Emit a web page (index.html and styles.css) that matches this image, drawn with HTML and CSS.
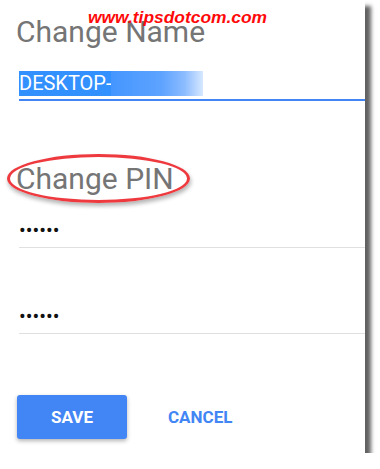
FILE: index.html
```html
<!DOCTYPE html>
<html lang="en">

<head>
    <meta charset="UTF-8">
    <meta name="viewport" content="width=device-width, initial-scale=1.0">
    <title>Change Name</title>
    <link rel="stylesheet" href="styles.css">
</head>

<body>
    <div class="panel">
        <div class="watermark">www.tipsdotcom.com</div>

        <h2 class="title">Change Name</h2>
        <div class="field active">
            <span class="selected">DESKTOP-</span><span class="blurred"></span>
        </div>

        <div class="title-wrap">
            <h2 class="title">Change PIN</h2>
            <div class="ellipse"></div>
        </div>
        <div class="field pin first">••••••</div>
        <div class="field pin second">••••••</div>

        <div class="actions">
            <button class="btn save">SAVE</button>
            <button class="btn cancel">CANCEL</button>
        </div>
    </div>
</body>

</html>
```

FILE: styles.css
```css
body {
    margin: 0;
    background-color: white;
    font-family: Roboto, "Noto Sans", sans-serif;
}

.panel {
    position: relative;
    width: 365px;
    height: 453px;
    box-sizing: border-box;
    padding: 14px 0 0 16px;
    background-color: white;
    box-shadow: 6px 6px 4px rgba(0, 0, 0, 0.62);
}

.watermark {
    position: absolute;
    top: 9px;
    left: 88px;
    font-family: "Liberation Sans", Arial, sans-serif;
    font-size: 17.4px;
    line-height: 17px;
    font-weight: bold;
    font-style: italic;
    color: #ff0a0a;
}

.title {
    margin: 0;
    font-size: 30px;
    line-height: 36px;
    font-weight: normal;
    color: #757575;
}

.field {
    margin-left: 3px;
    border-bottom: 1px solid #e0e0e0;
}

.field.active {
    margin-top: 21px;
    display: flex;
    padding-bottom: 3px;
    border-bottom: 2px solid #4285f4;
    font-size: 20px;
    line-height: 25px;
    height: 25px;
}

.selected {
    background-color: #3390ff;
    color: white;
}

.blurred {
    width: 92px;
    background: linear-gradient(to right, #4496ff 0%, #5ea3ff 55%, #8cbcff 80%, #d6e8ff 100%);
}

.title-wrap {
    position: relative;
    margin-top: 60px;
}

.ellipse {
    position: absolute;
    top: -7px;
    left: -9px;
    width: 177px;
    height: 43px;
    border: 3px solid #ee3a3f;
    border-radius: 50%;
    box-shadow: 1px 3px 4px rgba(0, 0, 0, 0.3);
}

.field.pin {
    font-size: 20px;
    line-height: 24px;
    color: #111;
    padding-bottom: 5px;
}

.field.first {
    margin-top: 21px;
}

.field.second {
    margin-top: 56px;
}

.actions {
    display: flex;
    align-items: center;
    gap: 25px;
    margin-top: 61px;
    margin-left: 1px;
}

.btn {
    height: 44px;
    border: none;
    border-radius: 3px;
    font-family: Roboto, sans-serif;
    font-size: 17px;
    font-weight: bold;
    cursor: pointer;
}

.save {
    width: 110px;
    background-color: #4285f4;
    color: white;
    box-shadow: 0 2px 4px rgba(0, 0, 0, 0.3);
}

.cancel {
    padding: 0 16px;
    background-color: transparent;
    color: #4285f4;
}
```
